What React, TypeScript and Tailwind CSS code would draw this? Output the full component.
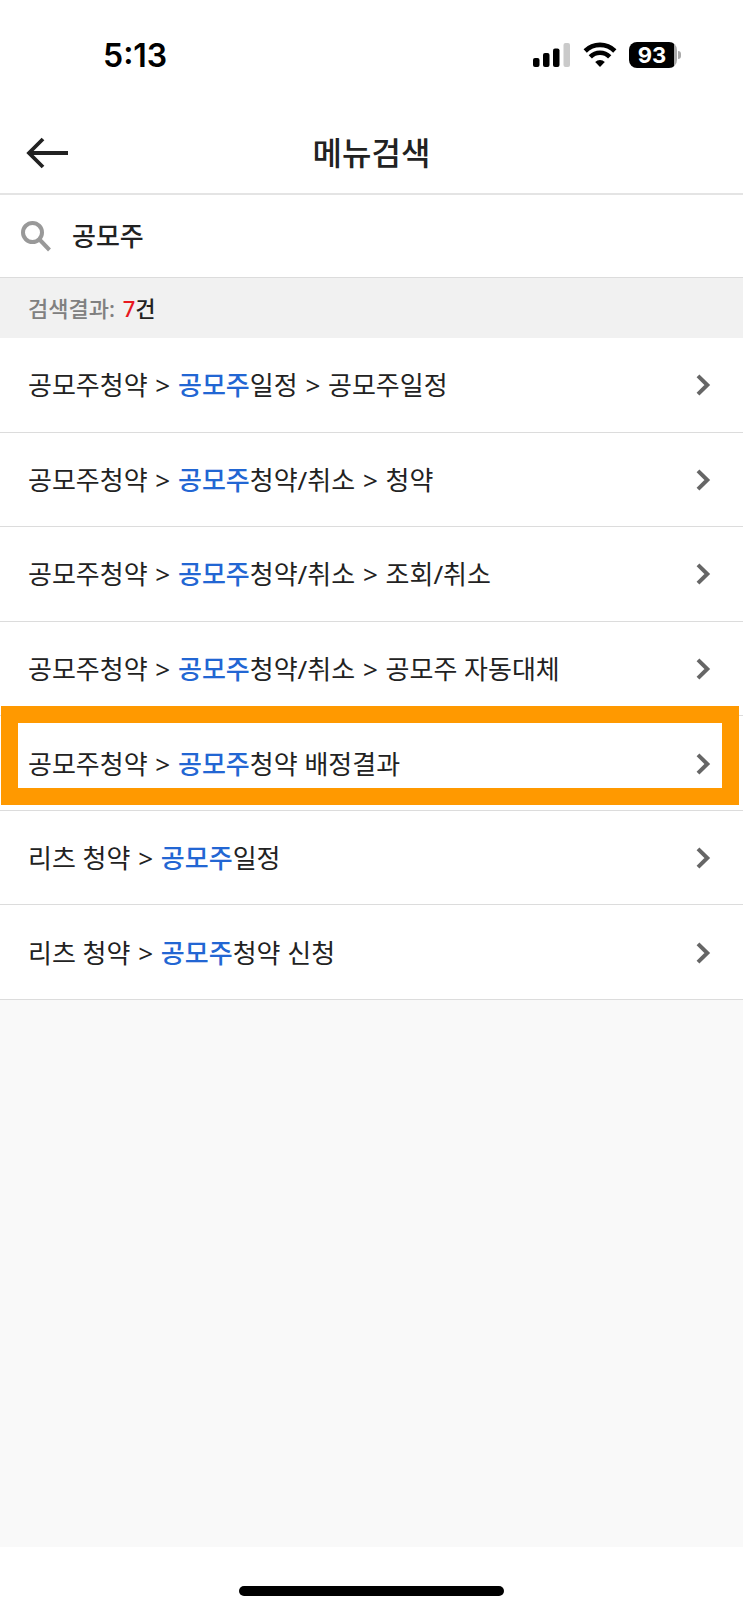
import { Fragment } from 'react'

interface MenuPath {
  before: string[]
  match: string
  after: string[]
  highlighted?: boolean
}

const results: MenuPath[] = [
  { before: ['공모주청약', ''], match: '공모주', after: ['일정', '공모주일정'] },
  { before: ['공모주청약', ''], match: '공모주', after: ['청약/취소', '청약'] },
  { before: ['공모주청약', ''], match: '공모주', after: ['청약/취소', '조회/취소'] },
  { before: ['공모주청약', ''], match: '공모주', after: ['청약/취소', '공모주 자동대체'] },
  { before: ['공모주청약', ''], match: '공모주', after: ['청약 배정결과'], highlighted: true },
  { before: ['리츠 청약', ''], match: '공모주', after: ['일정'] },
  { before: ['리츠 청약', ''], match: '공모주', after: ['청약 신청'] },
]

function StatusBar() {
  return (
    <div className="h-28 pl-[103px] pr-[62px] flex items-center justify-between font-['Inter',sans-serif] text-black">
      <span className="text-[32px] leading-8 font-semibold">5:13</span>
      <div className="pb-0.5 flex items-center">
        <svg width="38" height="26" viewBox="0 0 38 26" aria-hidden="true">
          <rect x="0" y="16" width="6.5" height="9" rx="2" />
          <rect x="10" y="11" width="6.5" height="14" rx="2" />
          <rect x="20" y="6.5" width="6.5" height="18.5" rx="2" />
          <rect x="30.5" y="1" width="6.5" height="24" rx="2" fill="#cacaca" />
        </svg>
        <svg className="ml-3" width="34" height="26" viewBox="0 0 34 26" fill="none" stroke="currentColor" aria-hidden="true">
          <path d="M2.2 9a21 21 0 0 1 29.6 0" strokeWidth="4.6" />
          <path d="M7.3 14.8a13.7 13.7 0 0 1 19.4 0" strokeWidth="4.6" />
          <path d="M17 25l-4.8-4.9a6.8 6.8 0 0 1 9.6 0z" fill="currentColor" stroke="none" />
        </svg>
        <div className="ml-3 flex items-center">
          <div className="w-12 h-[26px] pr-0.5 rounded-lg bg-[linear-gradient(to_right,#000_94%,#aaa_94%)] flex items-center justify-center text-[22px] leading-6 font-bold text-white">
            93
          </div>
          <div className="ml-px w-[3px] h-2 rounded-r-full bg-[#aaa]" />
        </div>
      </div>
    </div>
  )
}

function Crumbs({ parts }: { parts: string[] }) {
  return parts.map((part, i) => (
    <Fragment key={i}>
      {i > 0 && <span className="mx-px">{' > '}</span>}
      {part}
    </Fragment>
  ))
}

function ResultRow({ item }: { item: MenuPath }) {
  return (
    <li className="relative border-b border-[#dcdcdc]">
      <a href="#" className="h-full pt-px pl-7 pr-8 flex items-center justify-between">
        <span className="text-[26px] leading-9 whitespace-pre">
          <Crumbs parts={item.before} />
          <span className="font-medium text-[#2266d3]">{item.match}</span>
          <Crumbs parts={item.after} />
        </span>
        <svg width="15" height="22" viewBox="0 0 15 22" fill="none" stroke="#666" strokeWidth="4" aria-hidden="true">
          <path d="M2 1.9L11.3 11L2 20.1" />
        </svg>
      </a>
      {item.highlighted && (
        <div className="absolute z-10 -top-2.5 bottom-[5px] left-px right-1 border-[17px] border-[#ff9900] pointer-events-none" />
      )}
    </li>
  )
}

export default function App() {
  return (
    <div className="min-h-screen flex flex-col bg-white text-[#222] font-['Noto_Sans','Noto_Sans_CJK_KR',sans-serif]">
      <StatusBar />

      {/* Title bar */}
      <header className="relative h-[83px] border-b-2 border-[#e4e4e4] flex items-center justify-center">
        <button type="button" aria-label="뒤로" className="absolute left-[26px] cursor-pointer">
          <svg width="44" height="32" viewBox="0 0 44 32" fill="none" stroke="#222" strokeWidth="3.8">
            <path d="M42 16H3" />
            <path d="M17 2L3 16L17 30" />
          </svg>
        </button>
        <h1 className="text-[32px] leading-10 font-medium">메뉴검색</h1>
      </header>

      {/* Search box */}
      <label className="h-[83px] pl-5 border-b border-[#dcdcdc] flex items-center gap-5">
        <svg width="32" height="32" viewBox="0 0 32 32" fill="none" stroke="#999" strokeWidth="4" aria-hidden="true">
          <circle cx="12.5" cy="12.5" r="9.5" />
          <path d="M19 19L29.5 30" />
        </svg>
        <input
          type="text"
          aria-label="메뉴 검색어"
          defaultValue="공모주"
          className="flex-1 min-w-0 bg-transparent text-[26px] leading-9 font-medium outline-none"
        />
      </label>

      <p className="h-[60px] pl-7 bg-[#f1f1f1] flex items-center text-[22px] leading-8 font-medium whitespace-pre text-[#808080]">
        검색결과: <span className="ml-0.5 text-[#e8191f]">7</span>
        <span className="text-[#222]">건</span>
      </p>

      <ul className="min-h-[662px] grid auto-rows-fr">
        {results.map((item, i) => (
          <ResultRow key={i} item={item} />
        ))}
      </ul>

      <div className="flex-1 bg-[#f9f9f9]" />

      {/* Home indicator */}
      <footer className="h-16 pt-6 flex items-center justify-center">
        <div className="w-[265px] h-[10px] rounded-full bg-black" />
      </footer>
    </div>
  )
}
